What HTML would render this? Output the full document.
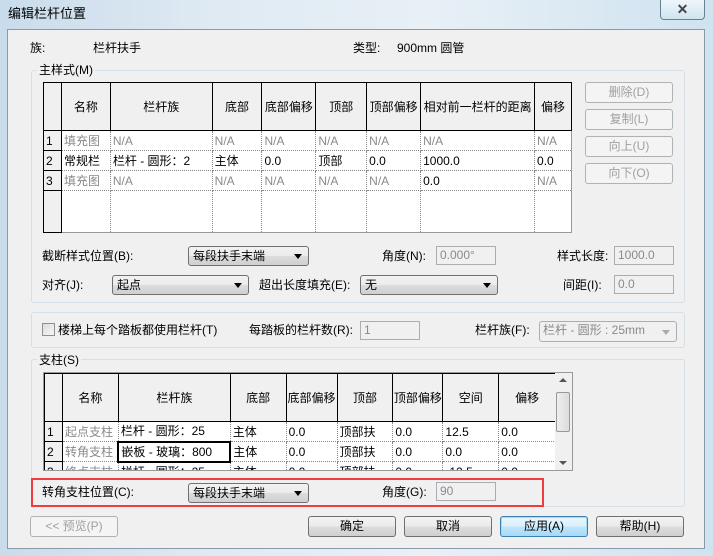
<!DOCTYPE html>
<html><head><meta charset="utf-8"><style>
*{margin:0;padding:0;box-sizing:border-box}
body{width:713px;height:556px;overflow:hidden;font:12px "Liberation Sans","Noto Sans CJK SC",sans-serif;color:#000;background:linear-gradient(90deg,#c9dceb,#dfeaf3 30%,#e8f0f6 60%,#cfe3f0);position:relative}
.a{position:absolute;white-space:nowrap;line-height:14px}
.client{position:absolute;left:7px;top:29px;width:698px;height:520px;background:#f0f0f0;border:1px solid #8a9aa8}
.grp{position:absolute;border:1px solid #d5dfe5;border-radius:3px}
.lbl{position:absolute;background:#f0f0f0;padding:0 2px;line-height:14px}
.btn{position:absolute;height:21px;border:1px solid #707070;border-radius:3px;background:linear-gradient(#f2f2f2,#ebebeb 50%,#dddddd 51%,#cfcfcf);text-align:center;line-height:19px}
.btn.dis{border-color:#adb2b5;background:#f4f4f4;color:#a0a0a0}
.dd{position:absolute;height:20px;border:1px solid #707070;border-radius:3px;background:linear-gradient(#f2f2f2,#ebebeb 50%,#dddddd 51%,#cfcfcf);padding-left:4px;line-height:18px}
.dd:after{content:"";position:absolute;right:6px;top:7px;border:4px solid transparent;border-top:5px solid #000;border-bottom:0}
.fld{position:absolute;height:19px;border:1px solid #abadb3;background:#f0f0f0;color:#8a8a8a;padding-left:3px;line-height:17px}
table{border-collapse:collapse;position:absolute;background:#fff}
td{height:20px;border:1px dotted #888;padding:0 2px;line-height:18px;white-space:nowrap;overflow:hidden}
th{font-weight:normal;background:#f0f0f0;border:1px solid #000;text-align:center;white-space:nowrap}
td.n{background:#f0f0f0;border:1px solid #000;border-top:1px solid #000;padding-left:2px}
.g{color:#8a8a8a}
</style></head><body>
<div class="a" style="left:8px;top:7px;font-size:13px">编辑栏杆位置</div>
<div style="position:absolute;left:660px;top:0;width:45px;height:20px;border:1px solid #6a7f8f;border-top:0;border-radius:0 0 4px 4px;background:linear-gradient(#eef6fb,#cfe4f0);text-align:center;font:bold 14px 'Liberation Sans';line-height:18px;color:#444">✕</div>
<div class="client"></div>

<div class="a" style="left:30px;top:41px">族:</div>
<div class="a" style="left:93px;top:41px">栏杆扶手</div>
<div class="a" style="left:353px;top:41px">类型:</div>
<div class="a" style="left:397px;top:41px">900mm 圆管</div>

<div class="grp" style="left:31px;top:70px;width:654px;height:233px"></div>
<div class="lbl" style="left:37px;top:63px">主样式(M)</div>

<table style="left:43px;top:82px;width:529px;border:1px solid #999">
<colgroup><col style="width:18px"><col style="width:49px"><col style="width:102px"><col style="width:50px"><col style="width:54px"><col style="width:51px"><col style="width:54px"><col style="width:114px"><col style="width:37px"></colgroup>
<tr style="height:48px"><th></th><th>名称</th><th>栏杆族</th><th>底部</th><th>底部偏移</th><th>顶部</th><th>顶部偏移</th><th>相对前一栏杆的距离</th><th>偏移</th></tr>
<tr><td class="n">1</td><td class="g">填充图</td><td class="g">N/A</td><td class="g">N/A</td><td class="g">N/A</td><td class="g">N/A</td><td class="g">N/A</td><td class="g">N/A</td><td class="g">N/A</td></tr>
<tr><td class="n">2</td><td>常规栏</td><td>栏杆 - 圆形：2</td><td>主体</td><td>0.0</td><td>顶部</td><td>0.0</td><td>1000.0</td><td>0.0</td></tr>
<tr><td class="n">3</td><td class="g">填充图</td><td class="g">N/A</td><td class="g">N/A</td><td class="g">N/A</td><td class="g">N/A</td><td class="g">N/A</td><td>0.0</td><td class="g">N/A</td></tr>
<tr style="height:42px"><td class="n"></td><td></td><td></td><td></td><td></td><td></td><td></td><td></td><td></td></tr>
</table>

<div class="btn dis" style="left:585px;top:82px;width:88px">删除(D)</div>
<div class="btn dis" style="left:585px;top:109px;width:88px">复制(L)</div>
<div class="btn dis" style="left:585px;top:136px;width:88px">向上(U)</div>
<div class="btn dis" style="left:585px;top:163px;width:88px">向下(O)</div>

<div class="a" style="left:42px;top:249px">截断样式位置(B):</div>
<div class="dd" style="left:188px;top:246px;width:121px">每段扶手末端</div>
<div class="a" style="left:382px;top:249px">角度(N):</div>
<div class="fld" style="left:436px;top:246px;width:60px">0.000°</div>
<div class="a" style="left:557px;top:249px">样式长度:</div>
<div class="fld" style="left:614px;top:246px;width:60px">1000.0</div>

<div class="a" style="left:42px;top:278px">对齐(J):</div>
<div class="dd" style="left:112px;top:275px;width:137px">起点</div>
<div class="a" style="left:259px;top:278px">超出长度填充(E):</div>
<div class="dd" style="left:360px;top:275px;width:138px">无</div>
<div class="a" style="left:563px;top:278px">间距(I):</div>
<div class="fld" style="left:614px;top:275px;width:60px">0.0</div>

<div class="grp" style="left:31px;top:312px;width:654px;height:36px"></div>
<div style="position:absolute;left:42px;top:323px;width:13px;height:13px;border:1px solid #8e8f8f;background:linear-gradient(135deg,#dcdcdc,#f6f6f6)"></div>
<div class="a" style="left:58px;top:323px">楼梯上每个踏板都使用栏杆(T)</div>
<div class="a" style="left:249px;top:323px">每踏板的栏杆数(R):</div>
<div class="fld" style="left:360px;top:321px;width:60px">1</div>
<div class="a" style="left:475px;top:323px">栏杆族(F):</div>
<div class="fld" style="left:539px;top:321px;width:138px;height:21px;border-radius:3px">栏杆 - 圆形 : 25mm<span style="position:absolute;right:6px;top:8px;border:4px solid transparent;border-top:5px solid #aaa;border-bottom:0"></span></div>

<div class="grp" style="left:31px;top:359px;width:654px;height:148px"></div>
<div class="lbl" style="left:37px;top:353px">支柱(S)</div>

<div style="position:absolute;left:43px;top:372px;width:530px;height:99px;overflow:hidden;border:1px solid #999;background:#fff">
<table style="left:0;top:0;width:512px">
<colgroup><col style="width:18px"><col style="width:56px"><col style="width:112px"><col style="width:56px"><col style="width:51px"><col style="width:56px"><col style="width:50px"><col style="width:56px"><col style="width:57px"></colgroup>
<tr style="height:48px"><th></th><th>名称</th><th>栏杆族</th><th>底部</th><th>底部偏移</th><th>顶部</th><th>顶部偏移</th><th>空间</th><th>偏移</th></tr>
<tr><td class="n">1</td><td class="g">起点支柱</td><td>栏杆 - 圆形：25</td><td>主体</td><td>0.0</td><td>顶部扶</td><td>0.0</td><td>12.5</td><td>0.0</td></tr>
<tr><td class="n">2</td><td class="g">转角支柱</td><td style="border:2px solid #000">嵌板 - 玻璃：800</td><td>主体</td><td>0.0</td><td>顶部扶</td><td>0.0</td><td>0.0</td><td>0.0</td></tr>
<tr><td class="n">3</td><td class="g">终点支柱</td><td>栏杆 - 圆形：25</td><td>主体</td><td>0.0</td><td>顶部扶</td><td>0.0</td><td>-12.5</td><td>0.0</td></tr>
</table>
<div style="position:absolute;left:511px;top:0;width:17px;height:97px;background:#f0f0f0">
<div style="position:absolute;left:4px;top:5px;border:4px solid transparent;border-bottom:4px solid #555;border-top:0"></div>
<div style="position:absolute;left:1px;top:19px;width:14px;height:40px;border:1px solid #999;border-radius:2px;background:linear-gradient(90deg,#eee,#dcdcdc)"></div>
<div style="position:absolute;left:4px;top:88px;border:4px solid transparent;border-top:4px solid #555;border-bottom:0"></div>
</div>
</div>

<div style="position:absolute;left:31px;top:478px;width:513px;height:29px;border:2px solid #f03c3c"></div>
<div class="a" style="left:42px;top:485px">转角支柱位置(C):</div>
<div class="dd" style="left:188px;top:483px;width:121px">每段扶手末端</div>
<div class="a" style="left:382px;top:485px">角度(G):</div>
<div class="fld" style="left:436px;top:482px;width:60px">90</div>

<div class="btn dis" style="left:30px;top:516px;width:88px">&lt;&lt; 预览(P)</div>
<div class="btn" style="left:308px;top:516px;width:88px">确定</div>
<div class="btn" style="left:404px;top:516px;width:88px">取消</div>
<div class="btn" style="left:500px;top:516px;width:88px;border-color:#3c7fb1;background:linear-gradient(#eaf6fd,#d9f0fc 50%,#bee6fd 51%,#a7d9f5);box-shadow:inset 0 0 0 1px #9fdcf8">应用(A)</div>
<div class="btn" style="left:596px;top:516px;width:88px">帮助(H)</div>
</body></html>
